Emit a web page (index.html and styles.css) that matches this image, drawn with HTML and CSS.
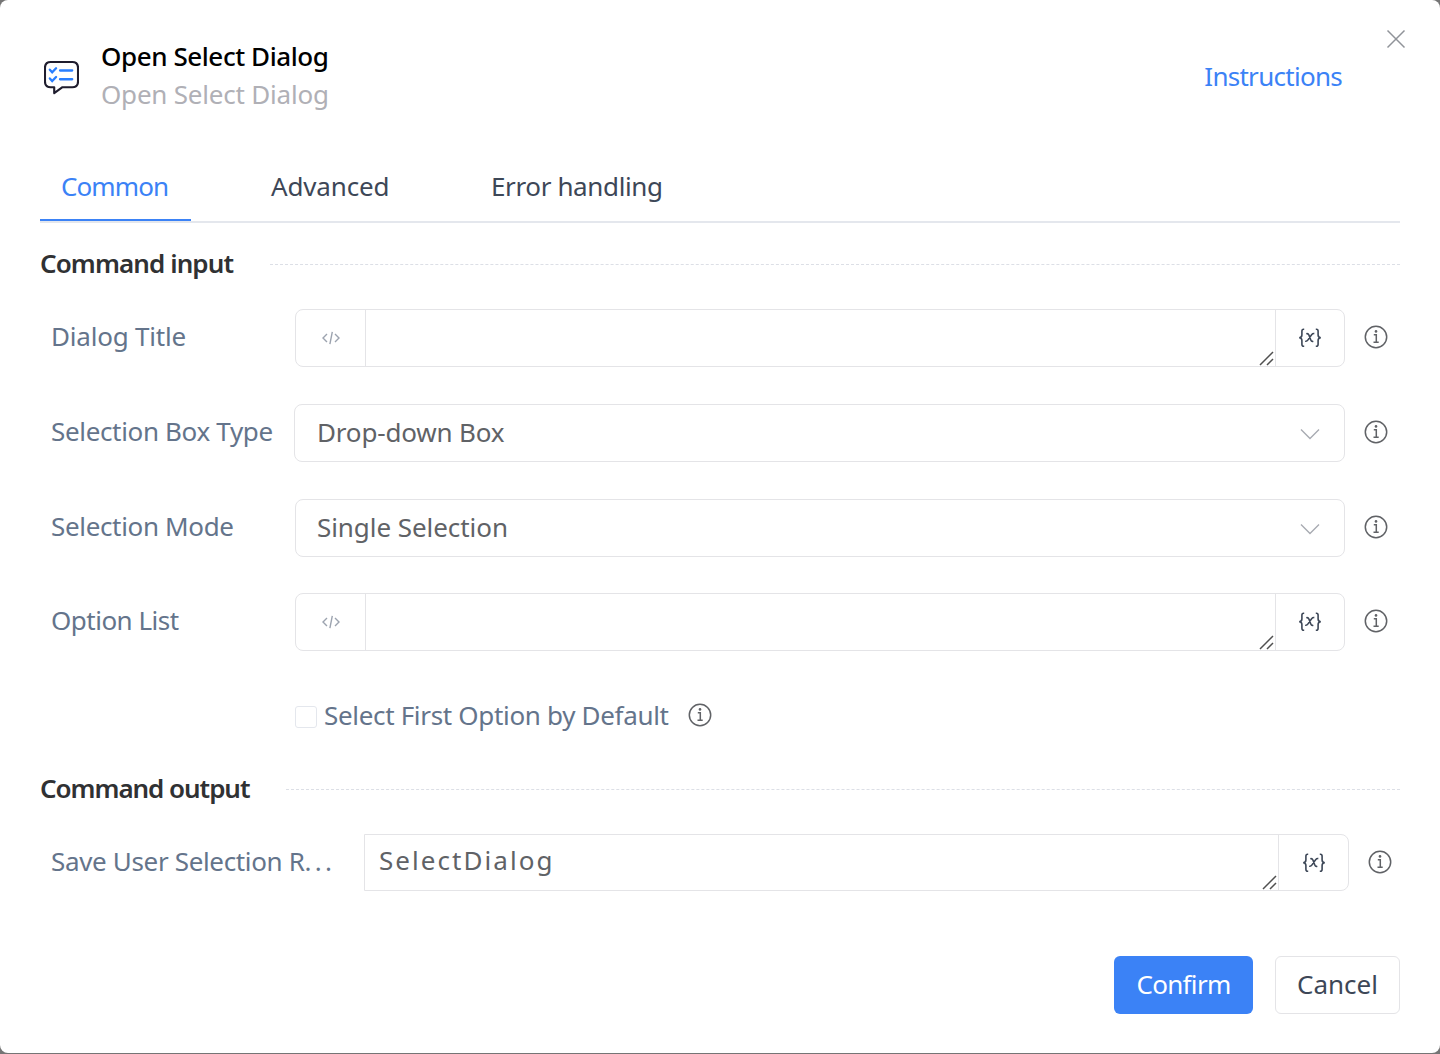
FILE: index.html
```
<!DOCTYPE html>
<html lang="en">
<head>
<meta charset="utf-8">
<title>Open Select Dialog</title>
<link rel="stylesheet" href="styles.css">
</head>
<body>
<svg class="sprite" aria-hidden="true">
  <symbol id="info" viewBox="0 0 24 24"><g fill="none" stroke="#606266" stroke-width="1.5"><circle cx="12" cy="12" r="10.7"/><path d="M9.8 9.8h2.500v7.300M9.500 17.300h5.200"/></g><circle cx="12" cy="6.400" r="1.300" fill="#606266"/></symbol>
  <symbol id="grip" viewBox="0 0 15 15"><path d="M1 14L14 1M8 14l6-6" fill="none" stroke="#505050" stroke-width="1.500"/></symbol>
  <symbol id="code" viewBox="0 0 20 14"><path d="M6 3L2 7l4 4M14 3l4 4-4 4M11.300.8L8.900 13.200" fill="none" stroke="#9ca3af" stroke-width="1.400"/></symbol>
  <symbol id="var" viewBox="0 0 24 20"><g fill="none" stroke="#3d4757" stroke-width="1.600"><path d="M6.200 1.300H5.600Q3.900 1.300 3.900 3.200V7Q3.900 9.500 1.200 9.700Q3.900 9.900 3.900 12.400V16.300Q3.900 18.300 5.600 18.300H6.200M17.800 1.300h.6q1.700 0 1.700 1.900V7q0 2.500 2.700 2.700-2.700.2-2.700 2.700v3.900q0 2-1.700 2h-.6"/><path d="M8.300 5.700q1.900-.5 2.600 1.300l1.900 5q.7 1.900 2.500 1.300M16.300 5.600Q14.800 5.300 13.600 6.700L10 11.900Q8.800 13.700 7.200 13.200"/></g></symbol>
  <symbol id="chevron" viewBox="0 0 20 12"><path d="M1 1.500L10 10.500 19 1.500" fill="none" stroke="#a8abb2" stroke-width="1.400"/></symbol>
</svg>
<main class="dialog">
  <header class="header">
    <svg class="logo" viewBox="0 0 36 36"><path d="M7 2h22q6 0 6 6v14q0 6-6 6H19l-8.500 6V28H7q-6 0-6-6V8q0-6 6-6z" fill="none" stroke="#1f1d2e" stroke-width="2.200" stroke-linejoin="round"/><path d="M6 10l2.400 2.600L12.400 8.500M6 19l2.400 2.600 4-4.100M16.500 10.800h12.500M16.500 19.800h12.500" fill="none" stroke="#2a7fff" stroke-width="2.400" stroke-linecap="round"/></svg>
    <div class="titles"><h1 class="title">Open Select Dialog</h1><p class="subtitle">Open Select Dialog</p></div>
    <a class="help">Instructions</a>
    <svg class="close" viewBox="0 0 20 20"><path d="M1.500 1.500l17 17M18.500 1.500l-17 17" stroke="#909399" stroke-width="1.500"/></svg>
  </header>
  <nav class="tabs"><a class="tab tab-active">Common</a><a class="tab tab-advanced">Advanced</a><a class="tab tab-error">Error handling</a></nav>
  <h2 class="section"><span class="section-text">Command input</span></h2>
  <div class="row">
    <label class="label label-title">Dialog Title</label>
    <div class="control"><span class="addon"><svg class="code"><use href="#code"/></svg></span><span class="field"><svg class="grip"><use href="#grip"/></svg></span><span class="addon addon-end"><svg class="var"><use href="#var"/></svg></span></div>
    <svg class="info"><use href="#info"/></svg>
  </div>
  <div class="row">
    <label class="label label-type">Selection Box Type</label>
    <div class="control select select-type"><span class="value value-type">Drop-down Box</span><svg class="chevron"><use href="#chevron"/></svg></div>
    <svg class="info"><use href="#info"/></svg>
  </div>
  <div class="row">
    <label class="label">Selection Mode</label>
    <div class="control select"><span class="value">Single Selection</span><svg class="chevron"><use href="#chevron"/></svg></div>
    <svg class="info"><use href="#info"/></svg>
  </div>
  <div class="row row-options">
    <label class="label label-options">Option List</label>
    <div class="control"><span class="addon"><svg class="code"><use href="#code"/></svg></span><span class="field"><svg class="grip"><use href="#grip"/></svg></span><span class="addon addon-end"><svg class="var"><use href="#var"/></svg></span></div>
    <svg class="info"><use href="#info"/></svg>
  </div>
  <div class="check-row"><i class="box"></i><span class="check-text">Select First Option by Default</span><svg class="info"><use href="#info"/></svg></div>
  <h2 class="section section-out"><span class="section-text">Command output</span></h2>
  <div class="row">
    <label class="label label-wide">Save User Selection R<span class="dots">...</span></label>
    <div class="control control-out"><span class="field"><span class="output">SelectDialog</span><svg class="grip"><use href="#grip"/></svg></span><span class="addon addon-end"><svg class="var"><use href="#var"/></svg></span></div>
    <svg class="info"><use href="#info"/></svg>
  </div>
  <footer class="footer"><button class="btn btn-primary">Confirm</button><button class="btn">Cancel</button></footer>
</main>
</body>
</html>
```
FILE: styles.css
```
* { box-sizing: border-box; }
body { margin: 0; background: #757575; font: 26px/38px "Noto Sans", sans-serif; color: #3d4757; }
h1, h2, p { margin: 0; font-size: inherit; }
.sprite { display: none; }
svg { flex: none; }
.dialog { height: 1053px; padding: 37px 40px 39px; background: #fff; border-radius: 8px; overflow: hidden; }

.header { display: flex; height: 117px; }
.logo { width: 35px; height: 35px; margin: 23px 0 0 4px; }
.titles { margin-left: 22px; flex: 1; }
.title { color: #000; font-weight: 500; letter-spacing: -0.42px; }
.subtitle { color: #b0b0b6; letter-spacing: -0.2px; }
.help { margin: 20px 44px 0 0; color: #3b82f6; letter-spacing: -0.72px; }
.close { width: 20px; height: 20px; margin: -8px -6px 0 0; }

.tabs { display: flex; height: 69px; border-bottom: 2px solid #e4e7ed; }
.tab { height: 67px; padding: 13px 0 0 21px; }
.tab-active { width: 151px; color: #3b82f6; border-bottom: 2px solid #3b82f6; letter-spacing: -0.9px; }
.tab-advanced { width: 220px; padding-left: 80px; letter-spacing: -0.15px; }
.tab-error { padding-left: 80px; letter-spacing: -0.37px; }

.section { display: flex; align-items: center; height: 38px; margin-top: 22px; color: #303133; font-weight: 600; letter-spacing: -0.9px; white-space: nowrap; }
.section::after { content: ""; flex: 1; margin-left: 37px; border-top: 1px dashed #dcdfe6; }
.section-text { margin-top: -2px; }
.section-out { margin-top: 35px; letter-spacing: -1.04px; }

.row { display: flex; height: 58px; margin-top: 37px; white-space: nowrap; }
.row-options { margin-top: 36px; }
.section + .row { margin-top: 26px; }
.label { width: 255px; padding: 8px 0 0 11px; color: #64748b; letter-spacing: -0.34px; }
.label-title { letter-spacing: -0.2px; }
.label-type { width: 254px; }
.label-options { letter-spacing: -0.5px; }
.label-wide { width: 324px; }
.dots { letter-spacing: 3.2px; }

.control { display: flex; width: 1050px; border: 1px solid #e4e4e7; border-radius: 8px; }
.select { align-items: center; justify-content: space-between; padding: 0 24px 0 21px; color: #606266; }
.select-type { width: 1051px; padding-left: 22px; }
.value { margin-top: -2px; letter-spacing: -0.06px; }
.value-type { letter-spacing: -0.17px; }
.addon { display: flex; width: 69px; align-items: center; justify-content: center; }
.addon-end { width: 68px; }
.field { display: flex; flex: 1; align-items: flex-end; justify-content: flex-end; border: solid #e4e4e7; border-width: 0 1px; }
.code { width: 20px; height: 14px; }
.grip { width: 15px; height: 15px; margin-right: 1px; }
.var { width: 24px; height: 20px; }
.chevron { width: 20px; height: 12px; margin-top: 2px; }
.info { width: 24px; height: 24px; margin: 15.5px 0 0 18.5px; }

.check-row { display: flex; height: 38px; margin: 46px 0 0 255px; color: #64748b; }
.box { width: 22px; height: 22px; margin: 9px 7px 0 0; border: 1px solid #e4e7ed; border-radius: 3px; }
.check-text { margin-top: -1px; letter-spacing: -0.32px; }
.check-row .info { margin: 6px 0 0 19px; }

.control-out { width: 985px; height: 57px; border-radius: 0 8px 8px 0; }
.control-out .addon-end { width: 69px; }
.control-out .field { border-left: 0; justify-content: space-between; padding-left: 14px; color: #606266; }
.output { align-self: center; margin-top: -5px; letter-spacing: 2.05px; }

.footer { display: flex; justify-content: flex-end; gap: 22px; margin-top: 64px; }
.btn { width: 125px; height: 58px; padding: 0 0 2px; border: 1px solid #e4e4e7; border-radius: 6px; background: #fff; color: #3d4757; font: inherit; }
.btn-primary { width: 139px; border: 0; background: #3b82f6; color: #fff; letter-spacing: -0.67px; }
```
